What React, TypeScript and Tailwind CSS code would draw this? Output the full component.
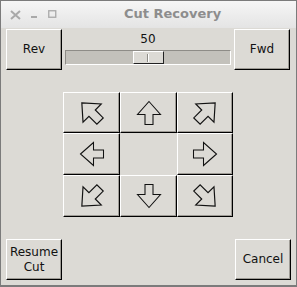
import React from 'react';

const font = { fontFamily: '"DejaVu Sans", "Liberation Sans", sans-serif' };

// raised Tk-style button
const Btn: React.FC<{ className?: string; children?: React.ReactNode }> = ({ className = '', children }) => (
  <button
    className={`flex items-center justify-center border border-t-white border-l-white border-r-black border-b-black bg-[#dcdad5] text-[12px] leading-[15px] text-[#111] shadow-[inset_-1px_-1px_0_#9e9b95] ${className}`}
  >
    {children}
  </button>
);

// outline arrow, pointing up before rotation
const Arrow: React.FC<{ angle: number }> = ({ angle }) => {
  const diag = angle % 90 !== 0;
  return (
    <svg width="28" height="28" viewBox="0 0 28 28">
      <g transform={diag ? `rotate(${angle} 14 14) translate(14 12.5) scale(1.12) translate(-13 -13)` : `rotate(${angle} 14 14) translate(1 1)`}>
        <polygon
          points="13,1.5 24.5,14.5 17,14.5 17,24.5 9,24.5 9,14.5 1.5,14.5"
          fill="#dcdad5"
          stroke="#111"
          strokeWidth="1.05"
          strokeLinejoin="miter"
        />
      </g>
    </svg>
  );
};

export default function App() {
  const cells: (number | null)[] = [-45, 0, 45, -90, null, 90, -135, 180, 135];

  return (
    <div style={font} className="flex h-[287px] w-[297px] flex-col border border-b-2 border-[#7b7b7b] bg-[#dcdad5]">
      {/* title bar */}
      <div className="relative flex h-[27px] shrink-0 items-center bg-gradient-to-b from-[#f6f6f6] to-[#e4e4e4]">
        <div className="flex items-center pl-[9px]">
          <svg width="11" height="10" viewBox="0 0 11 10">
            <path d="M1 1 L10 9 M10 1 L1 9" stroke="#a9a9a9" strokeWidth="2" />
          </svg>
          <svg width="7" height="3" viewBox="0 0 7 3" className="ml-[10px] mt-[6px]">
            <rect x="0" y="0" width="6" height="2" fill="#a9a9a9" />
          </svg>
          <svg width="9" height="9" viewBox="0 0 9 9" className="ml-[10px]">
            <rect x="0.75" y="0.75" width="7" height="6.5" fill="none" stroke="#a9a9a9" strokeWidth="1.3" />
          </svg>
        </div>
        <div className="absolute left-[123px] top-[5px] text-[13px] font-bold leading-[16px] text-[#8d8d8d]">
          Cut Recovery
        </div>
      </div>

      {/* top row */}
      <div className="mt-[1px] flex pl-[5px]">
        <Btn className="h-[41px] w-[56px]">Rev</Btn>
        <div className="flex w-[172px] flex-col items-center pt-[3px]">
          <div className="h-[14px] text-[12px] leading-[14px] text-[#111]">50</div>
          <div className="mt-[4px] flex h-[15px] w-[166px] items-center justify-center border border-t-[#8e8c87] border-l-[#8e8c87] border-r-white border-b-white bg-[#c3c1bb]">
            <div className="flex h-[13px] w-[31px] items-center justify-center border border-t-white border-l-white border-r-[#222] border-b-[#222] bg-[#dcdad5]">
              <div className="h-[8px] w-[2px] border-l border-l-[#8e8c87] border-r border-r-white" />
            </div>
          </div>
        </div>
        <Btn className="h-[41px] w-[56px]">Fwd</Btn>
      </div>

      {/* direction pad */}
      <div className="ml-[62px] mt-[22px] grid h-[125px] w-[170px] grid-cols-[57px_57px_56px] grid-rows-[41px_42px_42px]">
        {cells.map((a, i) =>
          a === null ? (
            <div key={i} />
          ) : (
            <Btn key={i}>
              <Arrow angle={a} />
            </Btn>
          )
        )}
      </div>

      {/* bottom row */}
      <div className="mt-[22px] flex justify-between pl-[5px] pr-[5px]">
        <Btn className="h-[41px] w-[56px] flex-col">
          <span>Resume</span>
          <span>Cut</span>
        </Btn>
        <Btn className="h-[41px] w-[56px]">Cancel</Btn>
      </div>
    </div>
  );
}
